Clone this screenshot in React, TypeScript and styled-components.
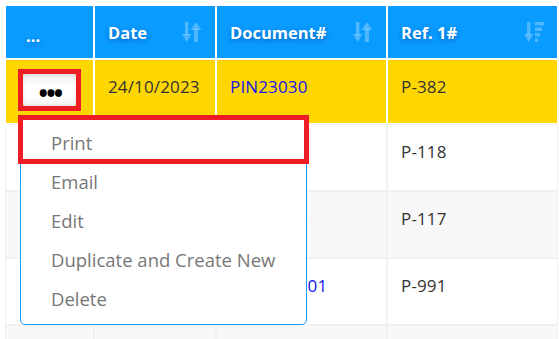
import React from "react";
import styled, { createGlobalStyle } from "styled-components";

const Global = createGlobalStyle`
  html, body { margin: 0; padding: 0; background: #fff; overflow: hidden; }
  body { font-family: "Open Sans", "Noto Sans", Arial, sans-serif; }
`;

const Page = styled.div`
  position: relative;
  padding: 5px 0 0 5px;
  width: 700px;
  height: 339px;
  overflow: hidden;
`;

const Table = styled.table`
  border-collapse: separate;
  border-spacing: 0;
  table-layout: fixed;
  width: 553px;
`;

const HeadCell = styled.th`
  background: #0a9bff;
  color: #fff;
  border: 1px solid #fff;
  height: 52px;
  padding: 0 13px;
  text-align: left;
  font-size: 16.5px;
  font-weight: 700;
  text-shadow: 0 2px 5px rgba(0, 40, 120, 0.45);
  vertical-align: middle;
`;

const HeadInner = styled.div`
  display: flex;
  align-items: center;
  justify-content: space-between;
`;

const DotsLabel = styled.span`
  display: block;
  padding: 6px 0 0 7px;
`;

const SortIcon = styled.svg`
  width: 20px;
  height: 20px;
  flex: none;
  fill: rgba(255, 255, 255, 0.28);
`;

const Row = styled.tr<{ $tone: "sel" | "white" | "gray" }>`
  background: ${(p) => (p.$tone === "sel" ? "#ffd700" : p.$tone === "gray" ? "#f8f8f8" : "#fff")};
  & > td {
    border-color: ${(p) => (p.$tone === "sel" ? "#fff" : "#f1f1f1")};
  }
`;

const Cell = styled.td<{ $short?: boolean }>`
  border: 1px solid #f1f1f1;
  box-sizing: content-box;
  height: ${(p) => (p.$short ? 48 : 50)}px;
  padding: 15px 13px 0;
  vertical-align: top;
  font-size: 17px;
  letter-spacing: 0.15px;
  line-height: 24px;
  color: #333;
  white-space: nowrap;
  overflow: hidden;
`;

const ActionCell = styled(Cell)`
  padding: 14px 0 0;
  height: ${(p) => (p.$short ? 49 : 51)}px;
  text-align: center;
`;

const Link = styled.a`
  color: #1414f0;
  text-decoration: none;
`;

const MoreButton = styled.button`
  display: inline-flex;
  align-items: center;
  justify-content: center;
  width: 53px;
  height: 32px;
  border: none;
  border-radius: 2px;
  background: linear-gradient(#ebebeb, #fff 35%, #fff 70%, #f1f1f1);
  box-shadow: inset 0 0 3px rgba(0, 0, 0, 0.12);
  font-family: "Open Sans", sans-serif;
  font-size: 25px;
  font-weight: 700;
  line-height: 1;
  color: #000;
  padding: 4px 0 0 1px;
  letter-spacing: -1.8px;
`;

const Menu = styled.ul`
  position: absolute;
  left: 20px;
  top: 116px;
  width: 287px;
  box-sizing: border-box;
  margin: 0;
  padding: 6px 0 6px;
  list-style: none;
  background: #fff;
  border: 1px solid #1a9bff;
  border-radius: 5px;
`;

const MenuItem = styled.li`
  height: 39px;
  line-height: 39px;
  padding-left: 30px;
  font-size: 18.5px;
  color: #777;
  white-space: nowrap;
`;

const Highlight = styled.div<{ $x: number; $y: number; $w: number; $h: number }>`
  position: absolute;
  left: ${(p) => p.$x}px;
  top: ${(p) => p.$y}px;
  width: ${(p) => p.$w}px;
  height: ${(p) => p.$h}px;
  box-sizing: border-box;
  border: 5px solid #ee1c25;
  pointer-events: none;
`;

const SortBoth = () => (
  <SortIcon viewBox="0 0 20 20">
    <rect x="3" y="0" width="3.4" height="13" />
    <polygon points="0,12 9.4,12 4.7,20" />
    <rect x="12" y="7" width="4" height="13" />
    <polygon points="8.5,8 19.5,8 14,0" />
  </SortIcon>
);

const SortAmount = () => (
  <SortIcon viewBox="0 0 20 20">
    <rect x="3" y="0" width="3.4" height="13" />
    <polygon points="0,12 9.4,12 4.7,20" />
    <rect x="11" y="0" width="9" height="3.5" />
    <rect x="11" y="5.5" width="7" height="3.5" />
    <rect x="11" y="11" width="5" height="3.5" />
    <rect x="11" y="16.5" width="3" height="3.5" />
  </SortIcon>
);

type R = { date: string; doc: string; ref: string };
const rows: R[] = [
  { date: "24/10/2023", doc: "PIN23030", ref: "P-382" },
  { date: "20/10/2023", doc: "PIN23029", ref: "P-118" },
  { date: "18/10/2023", doc: "PIN23028", ref: "P-117" },
  { date: "12/10/2023", doc: "PIN2310001", ref: "P-991" },
  { date: "10/10/2023", doc: "PIN23027", ref: "P-990" },
];

export default function App() {
  return (
    <>
      <Global />
      <Page>
        <Table>
          <colgroup>
            <col style={{ width: 89 }} />
            <col style={{ width: 122 }} />
            <col style={{ width: 171 }} />
            <col style={{ width: 171 }} />
          </colgroup>
          <thead>
            <tr>
              <HeadCell>
                <DotsLabel>...</DotsLabel>
              </HeadCell>
              <HeadCell>
                <HeadInner>
                  <span>Date</span>
                  <SortBoth />
                </HeadInner>
              </HeadCell>
              <HeadCell>
                <HeadInner>
                  <span>Document#</span>
                  <SortBoth />
                </HeadInner>
              </HeadCell>
              <HeadCell>
                <HeadInner>
                  <span>Ref. 1#</span>
                  <SortAmount />
                </HeadInner>
              </HeadCell>
            </tr>
          </thead>
          <tbody>
            {rows.map((r, i) => (
              <Row key={i} $tone={i === 0 ? "sel" : i % 2 === 0 ? "gray" : "white"}>
                <ActionCell $short={i === 0}>
                  {i === 0 && <MoreButton>•••</MoreButton>}
                </ActionCell>
                <Cell $short={i === 0}>{r.date}</Cell>
                <Cell $short={i === 0}>
                  <Link href="#">{r.doc}</Link>
                </Cell>
                <Cell $short={i === 0}>{r.ref}</Cell>
              </Row>
            ))}
          </tbody>
        </Table>
        <Menu>
          <MenuItem>Print</MenuItem>
          <MenuItem>Email</MenuItem>
          <MenuItem>Edit</MenuItem>
          <MenuItem>Duplicate and Create New</MenuItem>
          <MenuItem>Delete</MenuItem>
        </Menu>
        <Highlight $x={18} $y={69} $w={63} $h={42} />
        <Highlight $x={18} $y={115} $w={291} $h={49} />
      </Page>
    </>
  );
}
